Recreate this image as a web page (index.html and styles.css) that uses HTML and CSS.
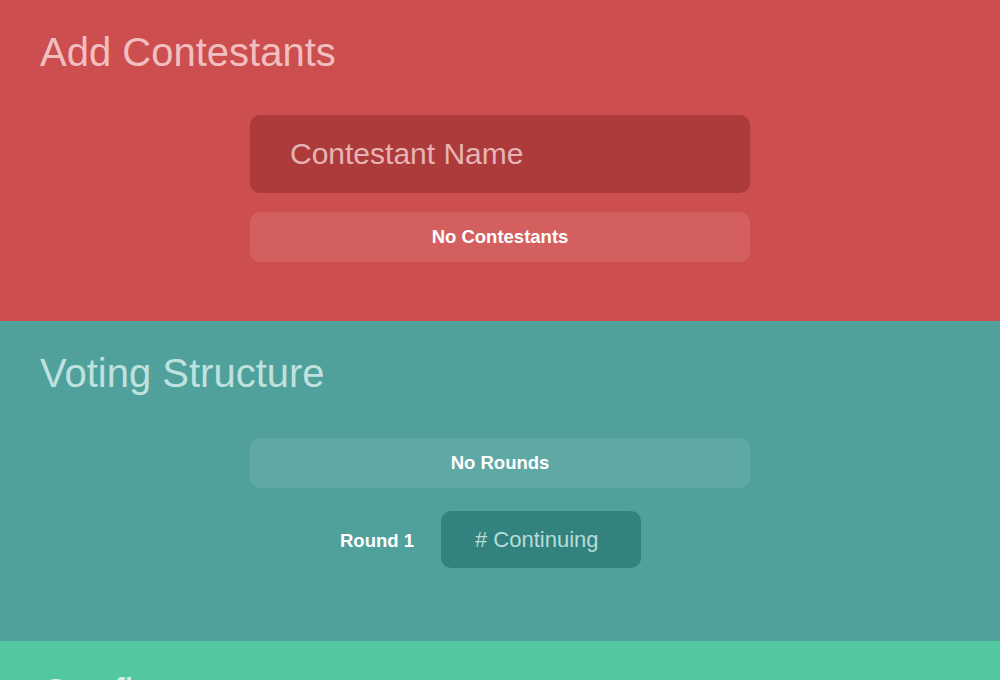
FILE: index.html
```html
<!DOCTYPE html>
<html lang="en">
<head>
<meta charset="utf-8">
<title>Contest Setup</title>
<link rel="stylesheet" href="styles.css">
</head>
<body>
<section class="panel panel-red">
  <h1 class="panel-title">Add Contestants</h1>
  <div class="panel-body body-contestants">
    <input class="field field-name" type="text" placeholder="Contestant Name">
    <div class="empty-box">No Contestants</div>
  </div>
</section>
<section class="panel panel-teal">
  <h1 class="panel-title">Voting Structure</h1>
  <div class="panel-body body-rounds">
    <div class="empty-box">No Rounds</div>
    <div class="round-row">
      <span class="round-label">Round 1</span>
      <input class="field field-continuing" type="text" placeholder="# Continuing">
    </div>
  </div>
</section>
<section class="panel panel-green">
  <h1 class="panel-title">Confirm</h1>
</section>
</body>
</html>
```
FILE: styles.css
```css
html, body {
  margin: 0;
  padding: 0;
}
body {
  font-family: "Liberation Sans", Arial, Helvetica, sans-serif;
  background: #52c8a0;
  height: 680px;
  overflow: hidden;
}
.panel {
  padding: 29px 40px 0;
}
.panel-title {
  margin: 0;
  font-size: 40px;
  line-height: 46px;
  font-weight: normal;
}
.panel-body {
  width: 500px;
  margin: 0 auto;
  display: flex;
  flex-direction: column;
}

/* red */
.panel-red {
  background: #cc4e4f;
  height: 292px;
}
.panel-red .panel-title { color: #f2bfc0; }
.body-contestants {
  margin-top: 40px;
  gap: 19px;
}
.field {
  border: none;
  outline: none;
  font-family: inherit;
  margin: 0;
  box-sizing: border-box;
  border-radius: 10px;
}
.field-name {
  height: 78px;
  width: 500px;
  padding: 0 0 0 40px;
  font-size: 30px;
  background: #ad3b3c;
  color: #f5d0d0;
}
.field-name::placeholder { color: #e7b4b5; opacity: 1; }
.empty-box {
  height: 50px;
  border-radius: 10px;
  display: flex;
  align-items: center;
  justify-content: center;
  color: #ffffff;
  font-size: 18.5px;
  font-weight: bold;
}
.panel-red .empty-box { background: #d3605f; }

/* teal */
.panel-teal {
  background: #50a09c;
  height: 291px;
}
.panel-teal .panel-title { color: #bfe2df; }
.body-rounds {
  margin-top: 42px;
}
.panel-teal .empty-box { background: #5ea8a5; }
.round-row {
  margin-top: 23px;
  display: flex;
  align-items: baseline;
  gap: 27px;
  padding-left: 90px;
}
.round-label {
  color: #ffffff;
  font-size: 18.5px;
  font-weight: bold;
}
.field-continuing {
  width: 200px;
  height: 57px;
  padding: 0 0 0 34px;
  font-size: 22px;
  background: #32827e;
  color: #d6eeec;
}
.field-continuing::placeholder { color: #b8dcd9; opacity: 1; }

/* green */
.panel-green {
  background: #52c8a0;
  height: 100px;
}
.panel-green .panel-title { color: #d2f1e6; }
```
